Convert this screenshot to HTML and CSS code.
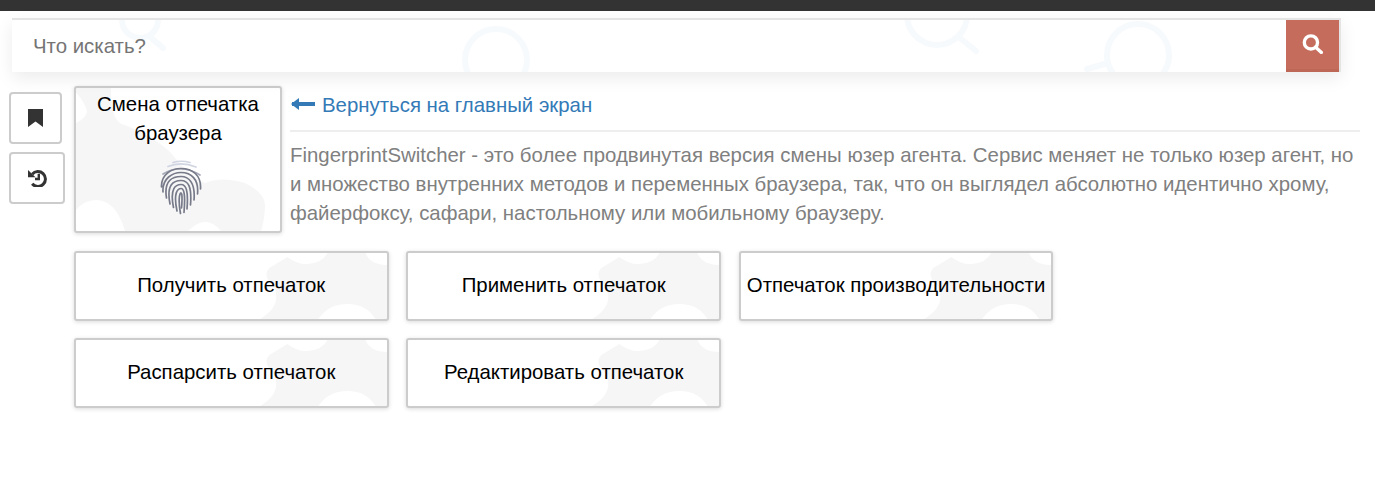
FILE: index.html
```html
<!DOCTYPE html>
<html lang="ru">
<head>
<meta charset="utf-8">
<title>FingerprintSwitcher</title>
<link rel="stylesheet" href="styles.css">
</head>
<body>
<div class="topbar"></div>
<form class="search">
  <svg class="search-deco" viewBox="0 0 1274 52" aria-hidden="true">
    <g fill="none" stroke="#f7fafc" stroke-width="6" stroke-linecap="round">
      <circle cx="128" cy="0" r="18"/><path d="M138 17l13 11"/>
      <circle cx="484" cy="40" r="31"/>
      <circle cx="925" cy="-5" r="30"/><path d="M948 18l16 13"/>
      <circle cx="1126" cy="35" r="31"/><path d="M1096 43l-21 6"/>
    </g>
  </svg>
  <span class="search-input">Что искать?</span>
  <span class="search-btn">
    <svg viewBox="0 0 20 19" width="21" height="20" aria-hidden="true"><circle cx="8.500" cy="8" r="6.300" fill="none" stroke="#fff" stroke-width="3.200"/><path d="M13 12.500l5.500 5" stroke="#fff" stroke-width="3.200" stroke-linecap="round"/></svg>
  </span>
</form>
<div class="main">
  <div class="side">
    <a class="side-btn side-btn-a">
      <svg viewBox="0 0 15 18" width="15" height="18" aria-hidden="true"><path d="M0 0h15v18l-7.500-5.500L0 18z" fill="#333"/></svg>
    </a>
    <a class="side-btn side-btn-b">
      <svg viewBox="0 0 19 18" width="19" height="18" aria-hidden="true"><path d="M4.200 5.200A7.500 7.500 0 1 1 4.200 14.800" fill="none" stroke="#333" stroke-width="3"/><path d="M0 1l7.500 7.200H0z" fill="#333"/><path d="M10.800 4.800V10H7" fill="none" stroke="#333" stroke-width="2.400"/></svg>
    </a>
  </div>
  <div class="content">
    <div class="head">
      <div class="card">
        <div class="card-title">Смена отпечатка браузера</div>
        <svg class="print" viewBox="0 0 42 56" width="42" height="56" aria-hidden="true">
          <g fill="none" stroke-linecap="round" stroke-width="1.700">
            <path stroke="#d0d5e2" d="M13 2.500Q21 0 30 2.500M8 6.500Q21 1 36 7"/>
            <path stroke="#a4a8b8" d="M3 14Q21 3 40 15"/>
            <path stroke="#777a88" d="M1.500 27C1 14 12 8.500 21 8.500C32 8.500 41.500 15 40.500 29M3 32C2 18 13 12.500 21 12.500C31 12.500 39 19 37.500 34M6.500 38C3.500 20 13 16.500 21 16.500C29 16.500 35.500 23 34 40M10 44C6 24 14 20.500 21 20.500C28 20.500 32 26 30.500 45M13.500 47.500C9.500 28 16 24.500 21 24.500C26 24.500 28.500 30 27 49M17 51C13 32 18 28.500 21 28.500C24 28.500 25.500 34 24 52.500M20.500 53.500C18 40 19.500 32.500 21.200 33C22.500 33 22 44 21.500 48"/>
          </g>
        </svg>
      </div>
      <div class="intro">
        <a class="back"><span class="back-arrow"></span>Вернуться на главный экран</a>
        <hr class="rule">
        <p class="desc">FingerprintSwitcher - это более продвинутая версия смены юзер агента. Сервис меняет не только юзер агент, но и множество внутренних методов и переменных браузера, так, что он выглядел абсолютно идентично хрому, файерфоксу, сафари, настольному или мобильному браузеру.</p>
      </div>
    </div>
    <div class="actions">
      <a class="action">Получить отпечаток</a>
      <a class="action">Применить отпечаток</a>
      <a class="action">Отпечаток производительности</a>
      <a class="action">Распарсить отпечаток</a>
      <a class="action">Редактировать отпечаток</a>
    </div>
  </div>
</div>
</body>
</html>
```

FILE: styles.css
```css
* { box-sizing: border-box; }
html, body { margin: 0; padding: 0; background: #fff; }
body {
  height: 492px;
  overflow: hidden;
  font-family: "Liberation Sans", Arial, sans-serif;
  font-size: 20.4px;
  color: #000;
}
.topbar { height: 11px; background: #333; }

.search {
  position: relative;
  display: flex;
  height: 54px;
  margin: 7px 34px 0 12px;
  background: #fff;
  border-top: 2px solid #e4e4e4;
  border-right: 2px solid #e4e4e4;
  box-shadow: 0 6px 18px rgba(0, 0, 0, .08);
}
.search-deco { position: absolute; left: 0; top: 0; width: 1274px; height: 52px; }
.search-input {
  position: relative;
  flex: 1;
  padding: 14px 21px;
  line-height: 24px;
  color: #757575;
}
.search-btn {
  position: relative;
  display: flex;
  align-items: center;
  justify-content: center;
  width: 53px;
  padding-bottom: 2px;
  background: #c66c5d;
  border-bottom: 3px solid #bd6757;
}

.main { display: flex; gap: 9px; margin: 14px 15px 0 9px; }
.side { display: flex; flex-direction: column; gap: 8px; padding-top: 6px; }
.side-btn {
  display: flex;
  align-items: center;
  justify-content: center;
  height: 52px;
  background: #fff;
  border: 2px solid #ccc;
  border-radius: 4px;
}
.side-btn-a { width: 53px; }
.side-btn-b { width: 56px; }
.content { flex: 1; }
.head { display: flex; gap: 8px; }

.card {
  width: 208px;
  height: 147px;
  padding: 2px 4px 0;
  text-align: center;
  line-height: 29px;
  border: 2px solid #ccc;
  border-radius: 3px;
  box-shadow: 0 1px 4px rgba(0, 0, 0, .15);
  background-color: #fff;
  background-image: url("data:image/svg+xml,%3Csvg xmlns='http://www.w3.org/2000/svg' viewBox='0 0 204 143' preserveAspectRatio='none'%3E%3Cpath fill='%23f6f6f7' d='M0 0H35Q35 20 39 29Q44 37 49 37Q80 50 95 65Q115 90 129 95Q145 88 169 95Q190 105 189 119Q188 135 185 143H145Q130 125 112 143H49Q40 112 20 112Q8 112 0 122V35Q14 28 10 20Q6 10 0 5Z'/%3E%3C/svg%3E");
  background-size: 100% 100%;
}
.card-title { height: 59px; }
.print { display: block; margin: 11px 0 0 80px; filter: blur(.5px); }

.intro { flex: 1; padding-top: 5px; }
.back {
  display: block;
  line-height: 29px;
  color: #337ab7;
}
.back-arrow {
  display: inline-block;
  position: relative;
  vertical-align: middle;
  width: 23px;
  height: 4px;
  margin: -6px 7px 0 2px;
  background: #337ab7;
}
.back-arrow::before {
  content: "";
  position: absolute;
  left: -1px;
  top: -4px;
  border: 6px solid transparent;
  border-left: 0;
  border-right: 8px solid #337ab7;
}
.rule { height: 2px; margin: 10px 0 9px; border: 0; background: #eee; }
.desc { margin: 0; line-height: 29px; color: #808080; }

.actions {
  display: grid;
  grid-template-columns: repeat(3, 314.5px);
  grid-auto-rows: 70px;
  gap: 17px 17.9px;
  margin-top: 18px;
}
.action {
  display: flex;
  align-items: center;
  justify-content: center;
  padding-bottom: 2px;
  white-space: nowrap;
  border: 2px solid #ccc;
  border-radius: 3px;
  box-shadow: 0 1px 4px rgba(0, 0, 0, .15);
  background-color: #fff;
  background-image: url("data:image/svg+xml,%3Csvg xmlns='http://www.w3.org/2000/svg' viewBox='0 0 311 66' preserveAspectRatio='none'%3E%3Cpath fill='%23f6f6f7' d='M184 66Q200 56 200 44Q200 36 196 32Q186 22 193 15L211 4Q222 12 231 11Q246 10 251 0H289Q294 12 311 12V66H299Q290 51 271 51Q252 51 242 66Z'/%3E%3C/svg%3E");
  background-size: 100% 100%;
}
```
